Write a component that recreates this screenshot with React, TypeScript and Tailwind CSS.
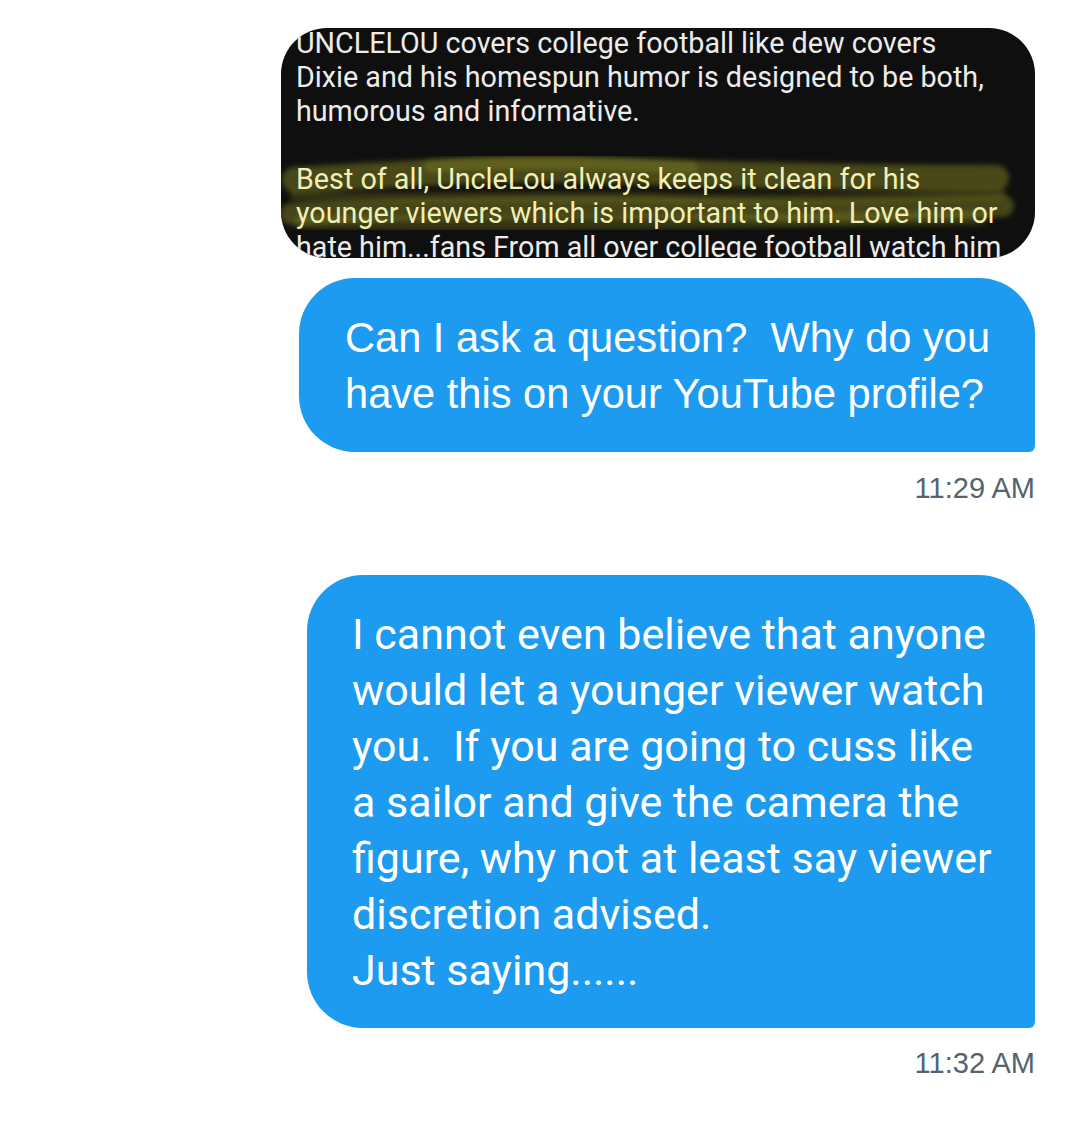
import React from 'react';

const bioLines = [
  'UNCLELOU covers college football like dew covers',
  'Dixie and his homespun humor is designed to be both,',
  'humorous and informative.',
  '',
  'Best of all, UncleLou always keeps it clean for his',
  'younger viewers which is important to him. Love him or',
  'hate him...fans From all over college football watch him',
];

const questionLines = ['Can I ask a question?  Why do you', 'have this on your YouTube profile?'];

const replyLines = [
  'I cannot even believe that anyone',
  'would let a younger viewer watch',
  'you.  If you are going to cuss like',
  'a sailor and give the camera the',
  'figure, why not at least say viewer',
  'discretion advised.',
  'Just saying......',
];

// marker scribble over the "keeps it clean" part of the bio screenshot
const Highlight = () => (
  <svg className="absolute inset-0 pointer-events-none" width="754" height="230" viewBox="0 0 754 230">
    <defs>
      <filter id="soft">
        <feGaussianBlur stdDeviation="2.5" />
      </filter>
    </defs>
    <g filter="url(#soft)" fill="none" strokeLinecap="round" strokeLinejoin="round">
      <path d="M14 152 C120 146 200 140 300 142 C420 145 520 150 715 150" stroke="rgba(150,150,40,0.42)" strokeWidth="26" />
      <path d="M150 138 C240 132 320 134 410 140" stroke="rgba(150,150,40,0.3)" strokeWidth="14" />
      <path d="M14 168 C120 172 260 166 400 170 C520 173 620 168 720 166" stroke="rgba(130,130,30,0.3)" strokeWidth="10" />
      <path d="M10 186 C140 180 300 178 460 182 C580 184 660 180 722 178" stroke="rgba(150,150,40,0.4)" strokeWidth="22" />
      <path d="M20 194 C200 198 400 194 700 190" stroke="rgba(150,150,40,0.28)" strokeWidth="14" />
    </g>
  </svg>
);

const Timestamp = ({ time, className }: { time: string; className: string }) => (
  <div className={`font-['Liberation_Sans',Arial,sans-serif] text-[29px] leading-[34px] text-[#536471] ${className}`}>
    {time}
  </div>
);

export default function App() {
  return (
    <div className="w-[1080px] h-[1140px] bg-white flex flex-col items-end pr-[45px] pt-[28px]">
      {/* screenshot of the youtube bio */}
      <div className="relative w-[754px] h-[230px] rounded-[46px] bg-[#0f0f0f] overflow-hidden">
        <Highlight />
        <div className="relative -mt-[2px] pl-[15px] font-['Roboto',sans-serif] text-[28.7px] leading-[34px] whitespace-pre text-[#ececec]">
          {bioLines.map((line, i) => (
            <div key={i} className={i === 4 || i === 5 ? 'text-[#f1efb6]' : ''}>
              {line || ' '}
            </div>
          ))}
        </div>
      </div>

      <div className="mt-[20px] w-[736px] bg-[#1d9bf0] rounded-[56px] rounded-br-[6px] pt-[32px] pb-[30px] pl-[46px] text-white font-['Liberation_Sans',Arial,sans-serif] text-[41.6px] leading-[56px] whitespace-pre">
        {questionLines.map((line) => (
          <div key={line}>{line}</div>
        ))}
      </div>
      <Timestamp time="11:29 AM" className="mt-[19px]" />

      <div className="mt-[70px] w-[728px] bg-[#1d9bf0] rounded-[56px] rounded-br-[6px] pt-[31px] pb-[30px] pl-[45px] text-white font-['Roboto',sans-serif] text-[43px] leading-[56px] whitespace-pre">
        {replyLines.map((line) => (
          <div key={line}>{line}</div>
        ))}
      </div>
      <Timestamp time="11:32 AM" className="mt-[18px]" />
    </div>
  );
}
